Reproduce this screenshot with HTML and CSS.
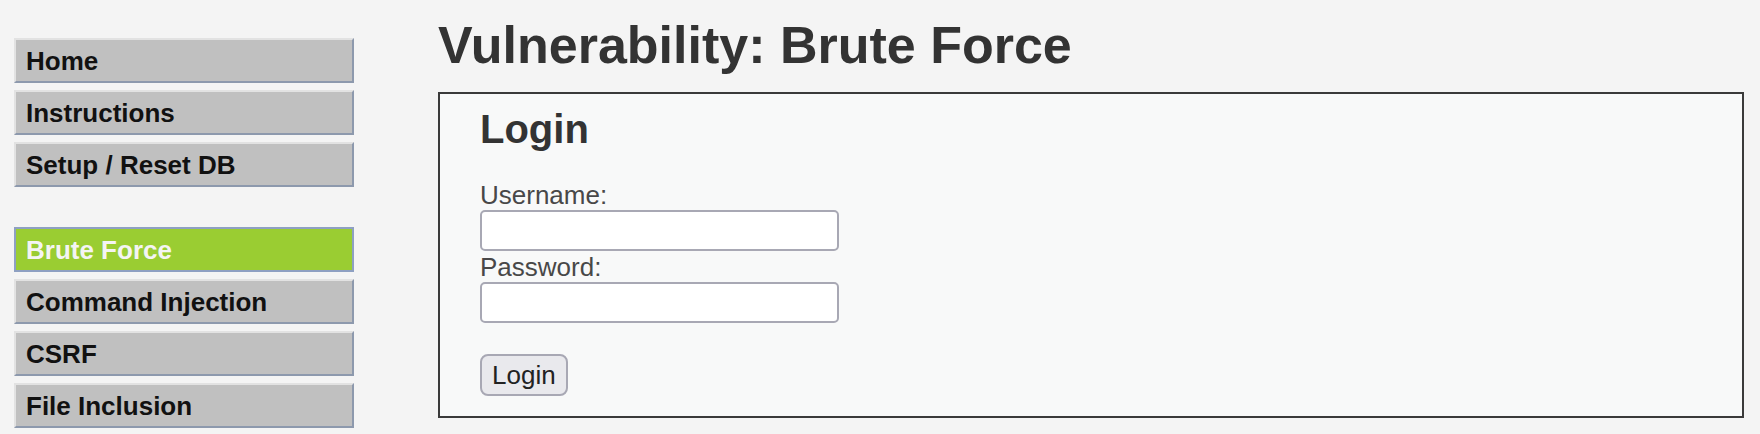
FILE: index.html
```html
<!DOCTYPE html>
<html>
<head>
<meta charset="utf-8">
<link rel="stylesheet" href="styles.css">
</head>
<body>
<div class="page">
  <nav class="menu">
    <ul class="group">
      <li><a class="item">Home</a></li>
      <li><a class="item">Instructions</a></li>
      <li><a class="item">Setup / Reset DB</a></li>
    </ul>
    <ul class="group">
      <li><a class="item selected">Brute Force</a></li>
      <li><a class="item">Command Injection</a></li>
      <li><a class="item">CSRF</a></li>
      <li><a class="item">File Inclusion</a></li>
    </ul>
  </nav>
  <main class="content">
    <h1 class="title">Vulnerability: Brute Force</h1>
    <div class="code-area">
      <h2 class="login-title">Login</h2>
      <form class="login-form">
        <label class="label">Username:</label>
        <input class="field" type="text">
        <label class="label">Password:</label>
        <input class="field" type="password">
        <button class="btn" type="button">Login</button>
      </form>
    </div>
  </main>
</div>
</body>
</html>
```
FILE: styles.css
```css
html, body {
  margin: 0;
  padding: 0;
  background: #f4f4f4;
  font-family: "Liberation Sans", Arial, sans-serif;
  color: #333;
}
.page {
  display: flex;
  align-items: flex-start;
  padding: 0 16px 0 14px;
}
.menu {
  width: 340px;
  flex: none;
  padding-top: 38px;
  display: flex;
  flex-direction: column;
  gap: 40px;
}
.group {
  list-style: none;
  margin: 0;
  padding: 0;
  display: flex;
  flex-direction: column;
  gap: 7px;
}
.item {
  display: block;
  box-sizing: border-box;
  height: 45px;
  padding: 7px 10px 5px 10px;
  font-size: 26px;
  line-height: 29px;
  font-weight: bold;
  color: #111;
  background: #c0c0c0;
  border-top: 2px solid #e2e2e2;
  border-left: 2px solid #e2e2e2;
  border-right: 2px solid #8d99ad;
  border-bottom: 2px solid #8d99ad;
}
.item.selected {
  background: #9acd32;
  color: #f4f4f4;
  border: 2px solid #8ea0c2;
}
.content {
  flex: 1;
  margin-left: 84px;
}
.title {
  margin: 15px 0 17px;
  font-size: 52px;
  line-height: 60px;
  font-weight: bold;
  color: #333;
}
.code-area {
  box-sizing: border-box;
  height: 326px;
  border: 2px solid #3a3a3a;
  background: #f8f9f9;
  padding: 12px 41px 0 40px;
}
.login-title {
  margin: 0 0 28px;
  font-size: 40px;
  line-height: 46px;
  font-weight: bold;
  color: #333;
}
.login-form {
  display: flex;
  flex-direction: column;
  align-items: flex-start;
}
.label {
  font-size: 26px;
  line-height: 30px;
  color: #484848;
}
.field {
  box-sizing: border-box;
  width: 359px;
  height: 41px;
  margin: 0 0 1px;
  border: 2px solid #a8a8b4;
  border-radius: 5px;
  background: #fff;
  font-size: 26px;
}
.btn {
  box-sizing: border-box;
  margin-top: 30px;
  height: 42px;
  padding: 0 10px;
  border: 2px solid #a8a8b4;
  border-radius: 8px;
  background: #e9e9ed;
  font-family: "Liberation Sans", Arial, sans-serif;
  font-size: 26px;
  line-height: 34px;
  color: #222;
}
```
